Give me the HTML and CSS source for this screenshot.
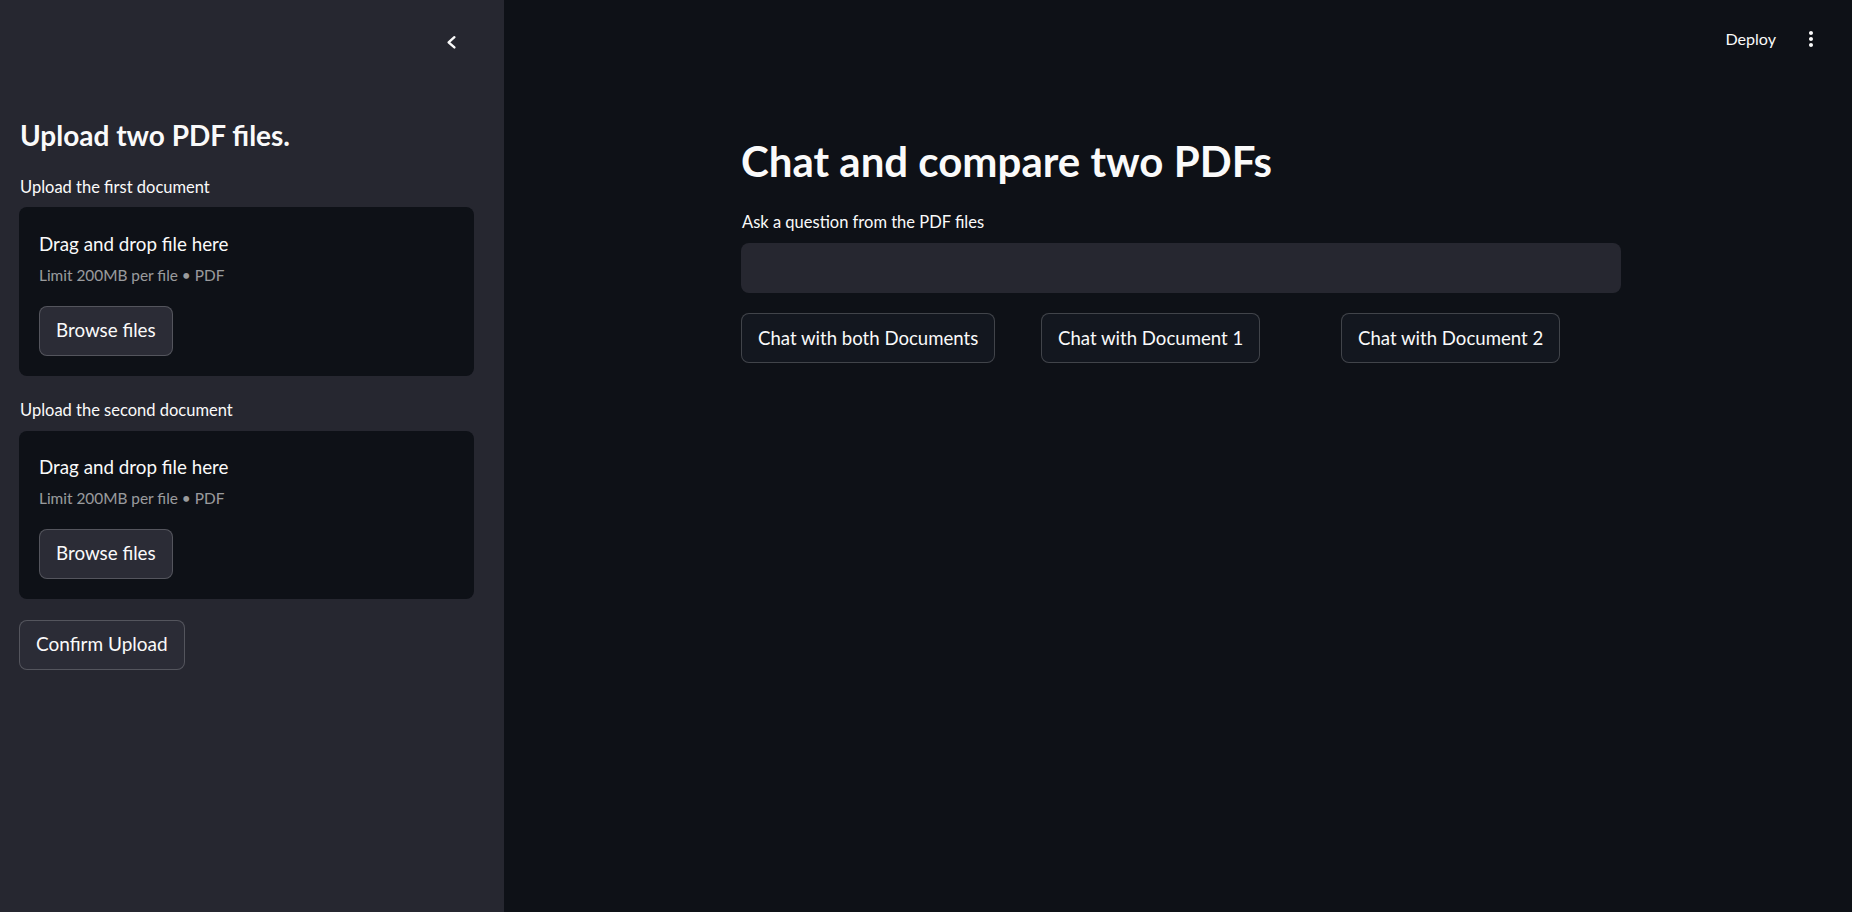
FILE: index.html
```html
<!DOCTYPE html>
<html lang="en">
<head>
<meta charset="utf-8">
<title>Chat and compare two PDFs</title>
<link rel="stylesheet" href="styles.css">
</head>
<body>
<div class="app">
  <aside class="sidebar">
    <div class="sb-top">
      <svg class="chevron" viewBox="0 0 16 16" width="16" height="16" aria-hidden="true"><path d="M11.4 3.2 L5.6 8.3 L11.4 13.4" fill="none" stroke="#fafafa" stroke-width="2.4" stroke-linecap="round" stroke-linejoin="round"/></svg>
    </div>
    <h2 class="sb-heading">Upload two PDF files.</h2>

    <div class="field field-first">
      <label class="label">Upload the first document</label>
      <div class="dropzone">
        <div class="dz-title">Drag and drop file here</div>
        <div class="dz-limit">Limit 200MB per file • PDF</div>
        <button class="btn btn-sb">Browse files</button>
      </div>
    </div>

    <div class="field field-second">
      <label class="label">Upload the second document</label>
      <div class="dropzone">
        <div class="dz-title">Drag and drop file here</div>
        <div class="dz-limit">Limit 200MB per file • PDF</div>
        <button class="btn btn-sb">Browse files</button>
      </div>
    </div>

    <button class="btn btn-sb btn-confirm">Confirm Upload</button>
  </aside>

  <main class="main">
    <header class="topbar">
      <span class="deploy">Deploy</span>
      <svg class="kebab" viewBox="0 0 24 24" width="24" height="24" aria-hidden="true"><path d="M12 8c1.1 0 2-.9 2-2s-.9-2-2-2-2 .9-2 2 .9 2 2 2zm0 2c-1.1 0-2 .9-2 2s.9 2 2 2 2-.9 2-2-.9-2-2-2zm0 6c-1.1 0-2 .9-2 2s.9 2 2 2 2-.9 2-2-.9-2-2-2z" fill="#fafafa"/></svg>
    </header>
    <section class="content">
      <h1 class="title">Chat and compare two PDFs</h1>
      <label class="label label-main">Ask a question from the PDF files</label>
      <div class="text-input"></div>
      <div class="btn-row">
        <div class="col"><button class="btn btn-main">Chat with both Documents</button></div>
        <div class="col"><button class="btn btn-main">Chat with Document 1</button></div>
        <div class="col"><button class="btn btn-main">Chat with Document 2</button></div>
      </div>
    </section>
  </main>
</div>
</body>
</html>
```
FILE: styles.css
```css
* { box-sizing: border-box; }
html, body {
  margin: 0;
  padding: 0;
  height: 100%;
  background: #0e1117;
  color: #fafafa;
  font-family: Lato, "Noto Sans", sans-serif;
}
.app {
  display: flex;
  height: 100vh;
  overflow: hidden;
}

/* Sidebar */
.sidebar {
  width: 504px;
  flex: none;
  background: #262730;
  padding: 0 30px 0 19px;
}
.sb-top {
  display: flex;
  justify-content: flex-end;
  padding-top: 33.5px;
  margin-right: 15px;
}
.chevron { display: block; }
.sb-heading {
  margin: 69.4px 0 0;
  font-size: 28px;
  line-height: 33.6px;
  font-weight: 700;
  padding-left: 1px;
}
.field-first { margin-top: 25.2px; }
.field-second { margin-top: 25.2px; }
.label {
  display: block;
  font-size: 16.5px;
  line-height: 19.8px;
  margin-bottom: 10px;
  padding-left: 1px;
}
.dropzone {
  background: #0e1117;
  border-radius: 8px;
  padding: 25.5px 20px 20px;
  display: flex;
  flex-direction: column;
  align-items: flex-start;
}
.dz-title {
  font-size: 18.8px;
  line-height: 22.6px;
}
.dz-limit {
  margin-top: 10.5px;
  font-size: 15.4px;
  line-height: 18.5px;
  color: rgba(250, 250, 250, 0.6);
}
.dropzone .btn { margin-top: 21px; }

/* Buttons */
.btn {
  display: inline-flex;
  align-items: center;
  height: 50px;
  padding: 0 16px;
  border: 1px solid rgba(250, 250, 250, 0.2);
  border-radius: 8px;
  color: #fafafa;
  font-family: inherit;
  font-size: 18.8px;
  line-height: 22.6px;
  cursor: pointer;
}
.btn-sb { background: #2b2c36; }
.btn-confirm {
  margin-top: 21px;
  font-size: 19px;
}
.btn-main {
  background: #13171f;
  font-size: 18.6px;
}

/* Main */
.main {
  flex: 1;
  background: #0e1117;
  display: flex;
  flex-direction: column;
}
.topbar {
  display: flex;
  justify-content: flex-end;
  align-items: center;
  padding: 27px 29px 0 0;
}
.deploy {
  font-size: 16.1px;
  line-height: 19.2px;
  margin-right: 23px;
}
.kebab { display: block; }
.content {
  width: 880px;
  margin-left: 237px;
}
.title {
  margin: 84.5px 0 0;
  font-size: 42px;
  line-height: 50.4px;
  font-weight: 700;
}
.label-main {
  margin-top: 26.8px;
  margin-bottom: 10.5px;
}
.text-input {
  height: 50px;
  background: #262730;
  border-radius: 8px;
}
.btn-row {
  margin-top: 20px;
  display: grid;
  grid-template-columns: repeat(3, 280px);
  column-gap: 20px;
}
.col { display: flex; }
```
